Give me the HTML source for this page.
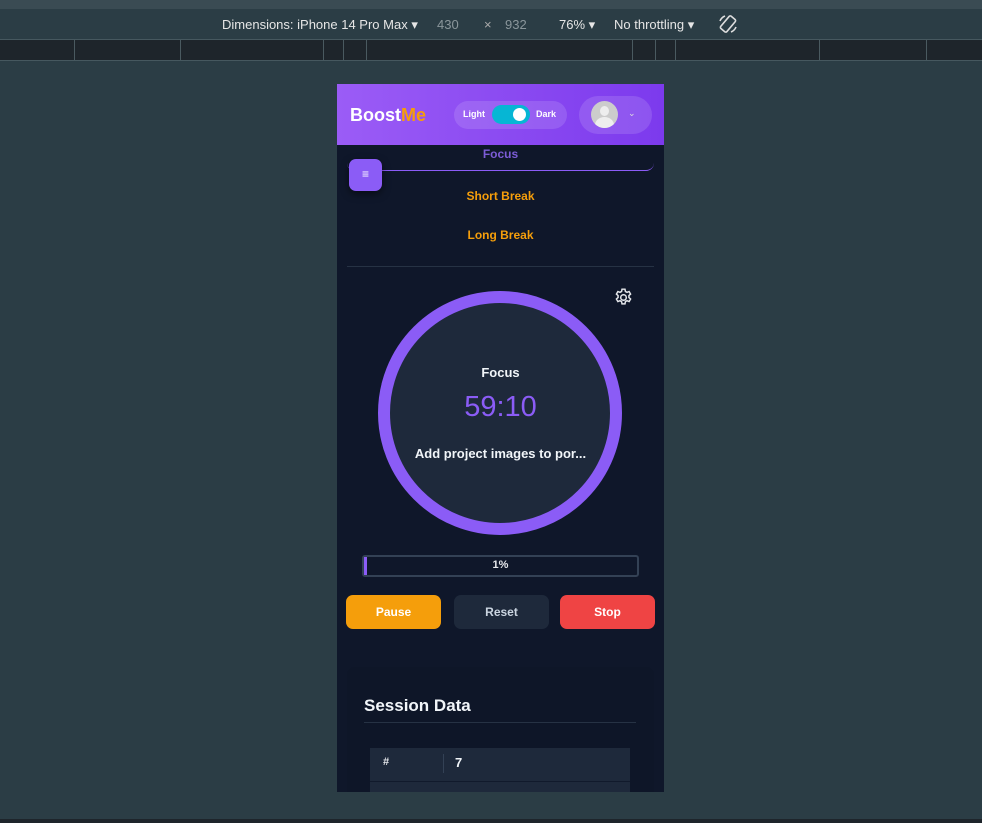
<!DOCTYPE html>
<html><head><meta charset="utf-8"><style>
*{margin:0;padding:0;box-sizing:border-box}
body{width:982px;height:823px;background:#2b3d45;font-family:"Liberation Sans",sans-serif;position:relative;overflow:hidden}
.top{position:absolute;left:0;top:0;width:982px;height:9px;background:#3a4b53}
.bar{position:absolute;left:0;top:9px;width:982px;height:30px;background:#2b3d45;color:#e6e6e6;font-size:13px}
.bar span{position:absolute;top:8px}
.ruler{position:absolute;left:0;top:39px;width:982px;height:22px;background:#1e252b;border-top:1px solid #46585f;border-bottom:1px solid #46585f}
.ruler i{position:absolute;top:0;width:1px;height:20px;background:#4a5a60}
.phone{position:absolute;left:337px;top:84px;width:327px;height:708px;background:#0f172a;overflow:hidden}
.hdr{position:absolute;left:0;top:0;width:327px;height:61px;background:linear-gradient(90deg,#9b5cf6,#7c3aed)}
.t{position:absolute;white-space:nowrap}
.btn{position:absolute;top:511px;height:34px;width:95px;border-radius:7px;font-size:12px;font-weight:bold;text-align:center;line-height:34px}
.bot{position:absolute;left:0;top:792px;width:982px;height:31px;background:#2b3d45}
</style></head><body>
<div class="top"></div>
<div class="bar">
<span style="left:222px">Dimensions: iPhone 14 Pro Max ▾</span>
<span style="left:437px;color:#8a969b">430</span>
<span style="left:484px;color:#aaa">×</span>
<span style="left:505px;color:#8a969b">932</span>
<span style="left:559px">76% ▾</span>
<span style="left:614px">No throttling ▾</span>
<svg style="position:absolute;left:717px;top:4px" width="22" height="22" viewBox="0 0 22 22" fill="none" stroke="#ddd" stroke-width="1.6"><rect x="7" y="3" width="8" height="16" rx="1.5" transform="rotate(40 11 11)"/><path d="M3 8a9 9 0 0 1 5-5M19 14a9 9 0 0 1-5 5"/></svg>
</div>
<div class="ruler">
<i style="left:74px"></i><i style="left:180px"></i><i style="left:323px"></i><i style="left:343px"></i><i style="left:366px"></i><i style="left:632px"></i><i style="left:655px"></i><i style="left:675px"></i><i style="left:819px"></i><i style="left:926px"></i>
</div>
<div class="phone">
<div class="hdr">
<div class="t" style="left:13px;top:21px;font-size:18px;font-weight:bold;color:#fff">Boost<span style="color:#f59e0b">Me</span></div>
<div style="position:absolute;left:117px;top:17px;width:113px;height:28px;border-radius:14px;background:rgba(255,255,255,.13)"></div>
<div class="t" style="left:126px;top:25px;font-size:9px;font-weight:bold;color:#fff">Light</div>
<div style="position:absolute;left:155px;top:21px;width:38px;height:19px;border-radius:10px;background:#06b6d4"></div>
<div style="position:absolute;left:176px;top:24px;width:13px;height:13px;border-radius:50%;background:#fff"></div>
<div class="t" style="left:199px;top:25px;font-size:9px;font-weight:bold;color:#fff">Dark</div>
<div style="position:absolute;left:242px;top:12px;width:73px;height:38px;border-radius:19px;background:rgba(255,255,255,.13)"></div>
<div style="position:absolute;left:254px;top:17px;width:27px;height:27px;border-radius:50%;background:#ccc;overflow:hidden"><div style="position:absolute;left:9px;top:5px;width:9px;height:10px;border-radius:50%;background:#eee"></div><div style="position:absolute;left:4px;top:16px;width:19px;height:16px;border-radius:50%;background:#eee"></div></div>
<div class="t" style="left:291px;top:24px;font-size:9px;color:#ddd">⌄</div>
</div>
<div style="position:absolute;left:10px;top:61px;width:307px;height:26px;border-bottom:1px solid #8b5cf6;border-radius:0 0 8px 8px"></div>
<div class="t" style="left:0;width:327px;text-align:center;top:63px;font-size:12px;font-weight:bold;color:#7c5cd6">Focus</div>
<div style="position:absolute;left:12px;top:75px;width:33px;height:32px;border-radius:7px;background:#8b5cf6;color:#fff;text-align:center;line-height:31px;font-size:12px;box-shadow:0 3px 8px rgba(0,0,0,.5)">≡</div>
<div class="t" style="left:0;width:327px;text-align:center;top:105px;font-size:12px;font-weight:bold;color:#f59e0b">Short Break</div>
<div class="t" style="left:0;width:327px;text-align:center;top:144px;font-size:12px;font-weight:bold;color:#f59e0b">Long Break</div>
<div style="position:absolute;left:10px;top:182px;width:307px;height:1px;background:#263244"></div>
<svg style="position:absolute;left:276px;top:203px" width="21" height="21" viewBox="0 0 24 24" fill="none" stroke="#e5e7eb" stroke-width="1.7"><circle cx="12" cy="12" r="3.2"/><path d="M10.3 2.5h3.4l.5 2.6 1.8 1 2.4-.9 1.7 2.9-1.9 1.7v2.2l1.9 1.7-1.7 2.9-2.4-.9-1.8 1-.5 2.6h-3.4l-.5-2.6-1.8-1-2.4.9-1.7-2.9 1.9-1.7v-2.2L3.9 8.1l1.7-2.9 2.4.9 1.8-1z"/></svg>
<div style="position:absolute;left:41px;top:207px;width:244px;height:244px;border-radius:50%;border:12px solid #8b5cf6;background:#1e293b"></div>
<div class="t" style="left:0;width:327px;text-align:center;top:281px;font-size:13px;font-weight:bold;color:#f1f5f9">Focus</div>
<div class="t" style="left:0;width:327px;text-align:center;top:307px;font-size:29px;color:#8b5cf6">59:10</div>
<div class="t" style="left:0;width:327px;text-align:center;top:362px;font-size:13px;font-weight:bold;color:#f1f5f9">Add project images to por...</div>
<div style="position:absolute;left:25px;top:471px;width:277px;height:22px;border:2px solid #334155;border-radius:3px"><div style="width:3px;height:18px;background:#8b5cf6"></div></div>
<div class="t" style="left:0;width:327px;text-align:center;top:475px;font-size:11px;font-weight:bold;color:#e5e7eb">1%</div>
<div class="btn" style="left:9px;background:#f59e0b;color:#fff">Pause</div>
<div class="btn" style="left:117px;background:#1e293b;color:#cbd5e1">Reset</div>
<div class="btn" style="left:223px;background:#ef4444;color:#fff">Stop</div>
<div style="position:absolute;left:10px;top:583px;width:307px;height:140px;border-radius:8px;background:#0e1628"></div>
<div class="t" style="left:27px;top:612px;font-size:17px;font-weight:bold;color:#f1f5f9">Session Data</div>
<div style="position:absolute;left:27px;top:638px;width:272px;height:1px;background:#263244"></div>
<div style="position:absolute;left:33px;top:664px;width:260px;height:60px;background:#1e293b"></div>
<div style="position:absolute;left:33px;top:697px;width:260px;height:1px;background:#111a2c"></div>
<div style="position:absolute;left:106px;top:670px;width:1px;height:19px;background:#334155"></div>
<div class="t" style="left:46px;top:672px;font-size:11px;font-weight:bold;color:#e5e7eb">#</div>
<div class="t" style="left:118px;top:671px;font-size:13px;font-weight:bold;color:#f1f5f9">7</div>
</div>
<div class="bot"></div>
<div style="position:absolute;left:0;top:819px;width:982px;height:4px;background:#1e252b"></div>
</body></html>
